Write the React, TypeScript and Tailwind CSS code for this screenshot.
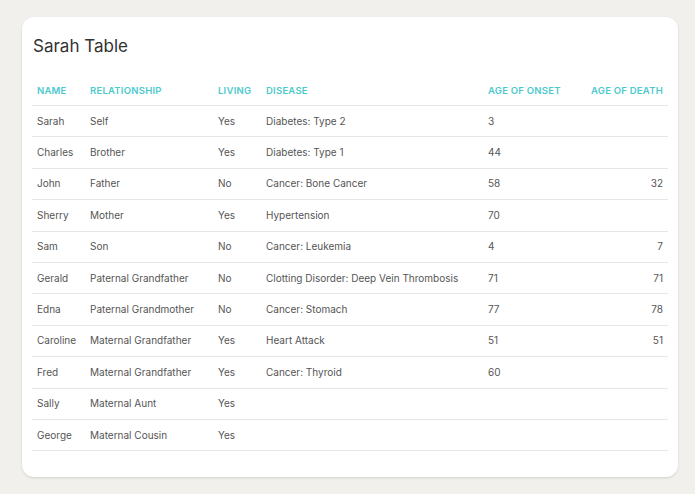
const rows: [string, string, string, string, string, string][] = [
  ["Sarah", "Self", "Yes", "Diabetes: Type 2", "3", ""],
  ["Charles", "Brother", "Yes", "Diabetes: Type 1", "44", ""],
  ["John", "Father", "No", "Cancer: Bone Cancer", "58", "32"],
  ["Sherry", "Mother", "Yes", "Hypertension", "70", ""],
  ["Sam", "Son", "No", "Cancer: Leukemia", "4", "7"],
  ["Gerald", "Paternal Grandfather", "No", "Clotting Disorder: Deep Vein Thrombosis", "71", "71"],
  ["Edna", "Paternal Grandmother", "No", "Cancer: Stomach", "77", "78"],
  ["Caroline", "Maternal Grandfather", "Yes", "Heart Attack", "51", "51"],
  ["Fred", "Maternal Grandfather", "Yes", "Cancer: Thyroid", "60", ""],
  ["Sally", "Maternal Aunt", "Yes", "", "", ""],
  ["George", "Maternal Cousin", "Yes", "", "", ""],
];

const cols = "grid grid-cols-[53px_128px_48px_222px_100px_1fr]";

export default function App() {
  return (
    <div className="min-h-screen w-[695px] h-[494px] bg-[#f1f0ec] pt-[17px] pl-[22px] pr-[17px]" style={{ fontFamily: "Inter, 'Open Sans', sans-serif" }}>
      <div className="bg-white rounded-xl h-[460px] px-[10px] pt-[18px] shadow-sm">
        <h1 className="text-[17px] leading-[22px] text-[#333] font-normal pl-[1px] mb-[26px]">Sarah Table</h1>
        <div className={`${cols} text-[9.5px] font-semibold text-[#4cc9cc] tracking-wide h-[16px] items-center border-b border-[#e6e6e6] pb-[6px] box-content whitespace-nowrap`}>
          <div className="px-[5px]">NAME</div>
          <div className="px-[5px]">RELATIONSHIP</div>
          <div className="px-[5px]">LIVING</div>
          <div className="px-[5px]">DISEASE</div>
          <div className="px-[5px]">AGE OF ONSET</div>
          <div className="px-[5px] text-right">AGE OF DEATH</div>
        </div>
        {rows.map((r) => (
          <div key={r[0]} className={`${cols} text-[10px] text-[#555] h-[31.4px] items-center border-b border-[#e6e6e6]`}>
            <div className="px-[5px] whitespace-nowrap">{r[0]}</div>
            <div className="px-[5px] whitespace-nowrap">{r[1]}</div>
            <div className="px-[5px]">{r[2]}</div>
            <div className="px-[5px] whitespace-nowrap">{r[3]}</div>
            <div className="px-[5px]">{r[4]}</div>
            <div className="px-[5px] text-right">{r[5]}</div>
          </div>
        ))}
      </div>
    </div>
  );
}
